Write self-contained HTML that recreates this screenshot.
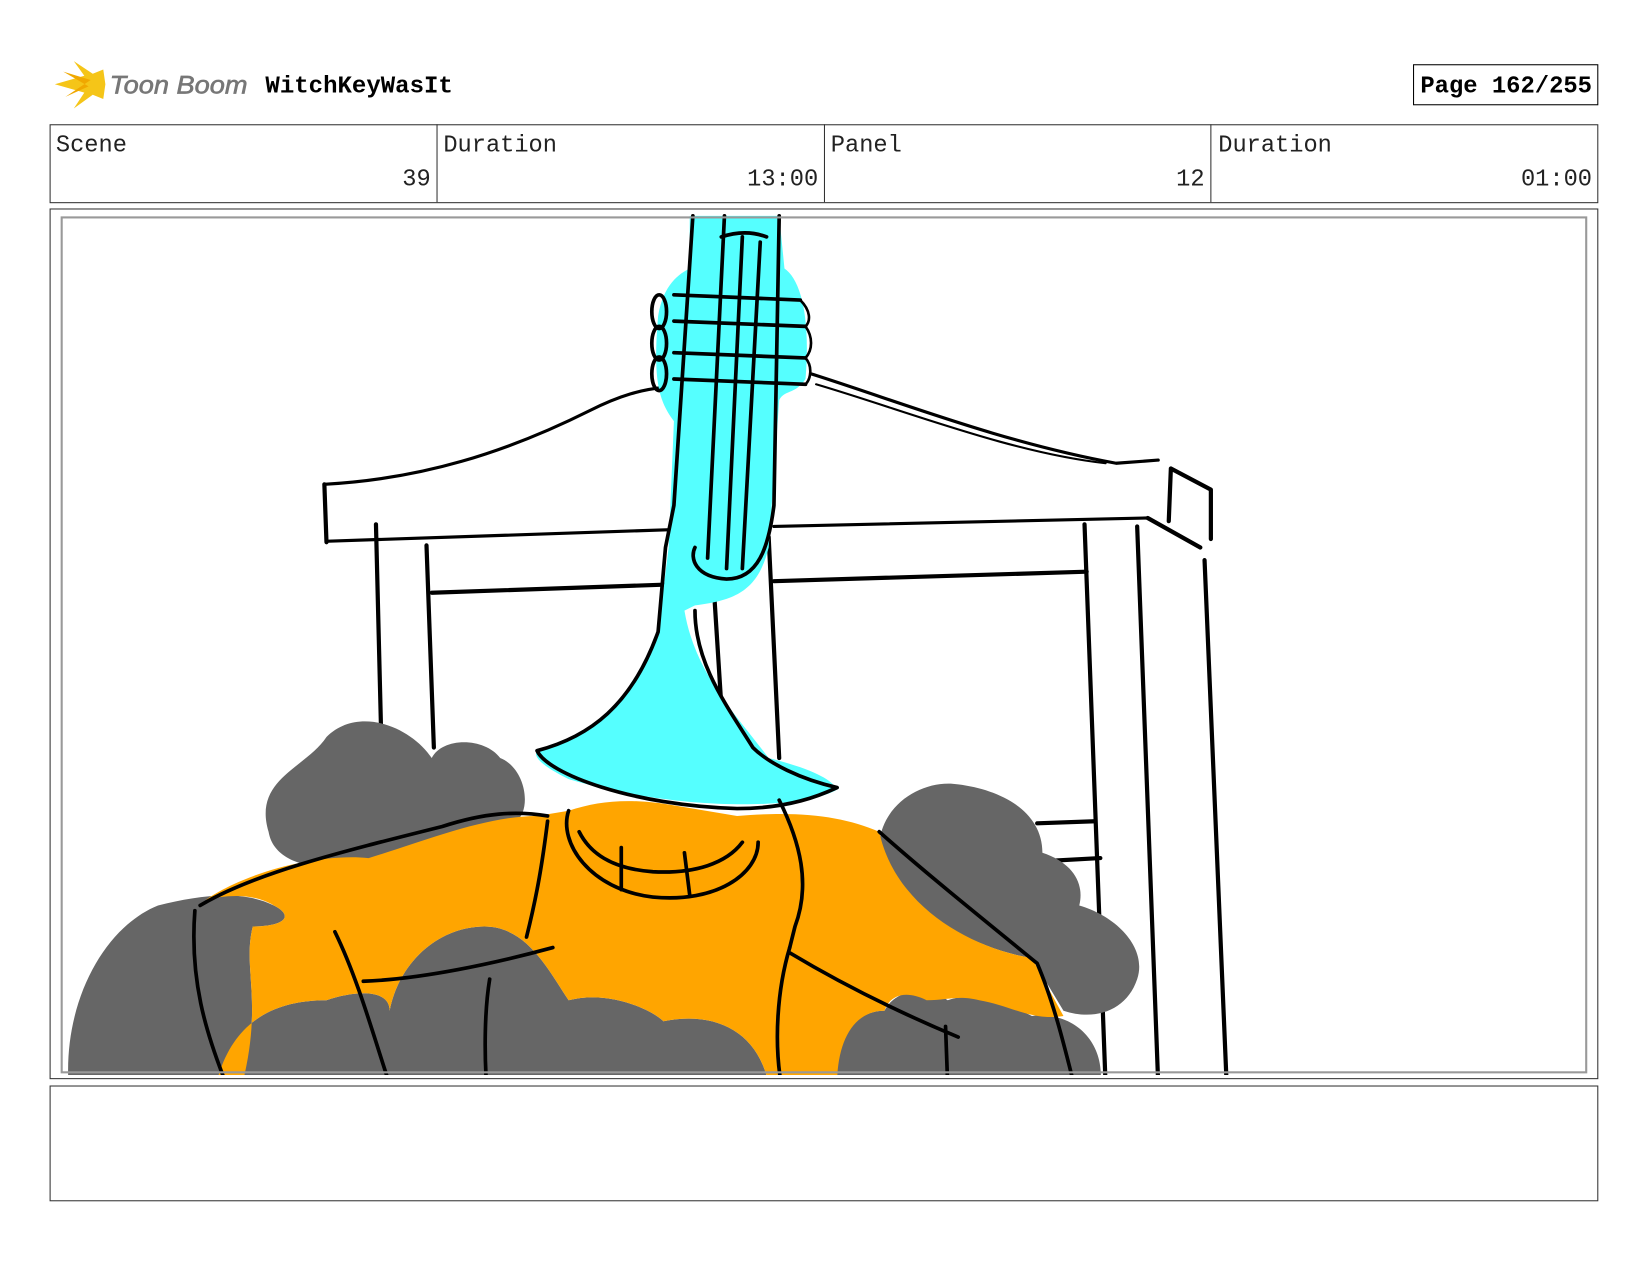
<!DOCTYPE html>
<html><head><meta charset="utf-8"><style>
html,body{margin:0;padding:0;background:#fff;width:1650px;height:1275px;overflow:hidden}
svg{display:block}
</style></head><body>
<svg width="1650" height="1275" viewBox="0 0 1567 1211" xmlns="http://www.w3.org/2000/svg">
<rect width="1567" height="1211" fill="#fff"/>
<g fill="#f5c518">
<path d="M52,80 L80,72 L70,58 L88,70 L98,66 L100,80 L98,94 L88,90 L70,103 L80,88 Z"/>
<path d="M60,68 L86,76 L62,92 L84,82 Z" fill="#f0a800"/>
</g>
<text x="104" y="89" font-family="Liberation Sans,sans-serif" font-style="italic" font-size="24" fill="#777" stroke="#777" stroke-width="0.6" textLength="131" lengthAdjust="spacingAndGlyphs">Toon Boom</text>
<text x="252" y="88" font-family="Liberation Mono,monospace" font-weight="bold" font-size="22.5" fill="#000" textLength="178" lengthAdjust="spacingAndGlyphs">WitchKeyWasIt</text>
<rect x="1342.5" y="61.5" width="175" height="38" fill="none" stroke="#000" stroke-width="1"/>
<text x="1349" y="88" font-family="Liberation Mono,monospace" font-weight="bold" font-size="22.5" fill="#000" textLength="163" lengthAdjust="spacingAndGlyphs">Page 162/255</text>
<g fill="none" stroke="#333" stroke-width="1">
<rect x="47.5" y="118.5" width="1470" height="74"/>
<line x1="415" y1="118" x2="415" y2="192"/><line x1="783" y1="118" x2="783" y2="192"/><line x1="1150" y1="118" x2="1150" y2="192"/>
</g>
<g font-family="Liberation Mono,monospace" font-size="22.5" fill="#222">
<text x="53" y="144">Scene</text><text x="421" y="144">Duration</text><text x="789" y="144">Panel</text><text x="1157" y="144">Duration</text>
<text x="409" y="176" text-anchor="end">39</text><text x="777" y="176" text-anchor="end">13:00</text><text x="1144" y="176" text-anchor="end">12</text><text x="1512" y="176" text-anchor="end">01:00</text>
</g>
<rect x="47.5" y="198.5" width="1470" height="826" fill="none" stroke="#333"/>
<rect x="47.5" y="1031.5" width="1470" height="109" fill="none" stroke="#333"/>
<defs><clipPath id="c"><rect x="58" y="203" width="1449" height="818"/></clipPath></defs>
<g clip-path="url(#c)" stroke-linecap="round" stroke-linejoin="round">
<g fill="none" stroke="#000" stroke-width="4">
<path d="M308,460 C400,455 480,430 560,390 C590,375 610,370 630,368" stroke-width="3"/>
<path d="M770,355 C850,380 950,420 1060,440 L1100,437" stroke-width="3"/>
<path d="M775,365 C860,390 960,430 1050,440" stroke-width="2"/>
<path d="M308,460 L310,515"/>
<path d="M312,514 L640,503 M735,500 L1090,492" stroke-width="3"/>
<path d="M1090,492 L1140,520"/>
<path d="M1112,445 L1150,465 L1150,512 M1112,445 L1110,495"/>
<path d="M357,498 L362,700"/>
<path d="M405,518 L412,710"/>
<path d="M410,563 L640,555 M735,552 L1032,543"/>
<path d="M678,560 L685,670 M730,510 L740,720"/>
<path d="M1030,498 L1050,1030 M1080,500 L1100,1030 M1144,532 L1165,1030"/>
<path d="M985,782 L1040,780 M990,818 L1045,815"/>
</g>
<g fill="#666">
<path d="M255,790 C240,740 290,730 310,700 C340,670 390,690 410,720 C420,700 460,700 475,720 C500,730 505,770 490,780 L350,820 C300,830 260,820 255,790Z"/>
<path d="M65,1030 C60,950 100,880 150,860 C190,850 230,845 260,860 C280,870 270,880 240,880 C230,920 250,950 230,1030Z"/>
<path d="M205,1030 C220,970 260,950 310,950 C340,940 370,940 370,960 C380,910 420,880 460,880 C500,880 520,920 540,950 C580,940 620,960 630,970 C680,960 720,980 730,1030Z"/>
<path d="M835,800 C840,760 880,740 910,745 C950,750 990,770 990,810 C1020,820 1030,840 1025,860 C1060,870 1090,900 1080,930 C1070,960 1040,970 1010,960 L980,910 C920,900 850,860 835,800Z"/>
<path d="M795,1030 C790,990 810,960 840,960 C850,940 880,935 900,950 C930,940 960,955 980,965 C1020,960 1050,990 1045,1030Z"/>
</g>
<path fill="#ffa500" d="M195,855 C230,830 300,810 350,815 C400,800 460,775 510,775 L540,770 C570,760 600,758 640,765 L700,775 C760,770 800,775 835,790 C850,860 920,900 980,910 L1010,965 C980,970 960,955 930,950 C910,945 900,950 880,950 C860,940 845,945 840,960 C810,960 795,990 795,1030 L730,1030 C720,980 680,960 630,970 C620,960 580,940 540,950 C520,920 500,880 460,880 C420,880 380,910 370,960 C370,940 340,940 310,950 C260,950 220,970 205,1030 L230,1030 C250,950 230,920 240,880 C270,880 280,870 260,860 C240,848 215,850 195,855Z"/>
<g fill="#55ffff">
<path d="M655,205 L740,205 L745,255 C760,265 770,300 765,360 C755,375 745,370 740,380 L730,520 C720,560 700,570 660,575 L650,580 C660,640 700,680 730,720 C770,730 790,740 795,750 C760,770 640,770 540,740 C520,730 505,720 510,713 C560,700 600,670 625,600 L635,520 L640,400 C625,380 620,360 625,300 C630,270 645,260 655,255Z"/>
</g>
<g fill="none" stroke="#000" stroke-width="3.5">
<path d="M658,205 L640,480 L632,520 L625,600 C600,670 560,700 510,713 C520,735 600,765 700,768 C750,768 780,755 795,748 C760,740 730,725 715,710 C690,670 660,630 660,580"/>
<path d="M740,205 L735,480 C730,520 720,550 690,550 C660,548 655,530 660,520"/>
<path d="M685,225 C700,220 715,220 728,225"/>
<path d="M688,205 L672,530 M705,225 L690,540 M722,230 L705,540"/>
<path d="M640,280 L760,285 M640,305 L765,310 M640,335 L765,340 M640,360 L765,365"/>
<ellipse cx="626" cy="296" rx="7" ry="16"/><ellipse cx="626" cy="326" rx="7" ry="16"/><ellipse cx="626" cy="355" rx="7" ry="16"/>
<path d="M760,285 C770,295 770,305 765,310 C772,320 772,332 765,340 C772,348 770,360 765,365" stroke-width="2.5"/>
<path d="M190,860 C240,830 320,810 420,785 C460,772 490,770 520,775"/>
<path d="M520,780 C515,820 510,850 500,890"/>
<path d="M540,770 C530,800 560,845 620,852 C680,858 720,830 720,800"/>
<path d="M550,790 C560,810 580,825 620,828 C660,830 690,820 705,800"/>
<path d="M590,805 L590,845 M650,810 L655,850 M740,760 C760,800 770,840 755,880 L750,900"/>
<path d="M185,865 C180,930 195,980 215,1030"/>
<path d="M318,885 C340,930 355,985 370,1030"/>
<path d="M345,932 C400,930 470,915 525,900"/>
<path d="M465,930 C460,960 460,1000 462,1030"/>
<path d="M750,900 C738,940 735,990 742,1030"/>
<path d="M750,905 C800,935 850,960 910,985"/>
<path d="M898,975 L900,1030"/>
<path d="M835,790 C880,830 930,870 985,915 C1000,950 1010,990 1020,1030"/>
</g>
</g>
<rect x="58.5" y="206.5" width="1448" height="812" fill="none" stroke="#999" stroke-width="2"/>
</svg>
</body></html>
